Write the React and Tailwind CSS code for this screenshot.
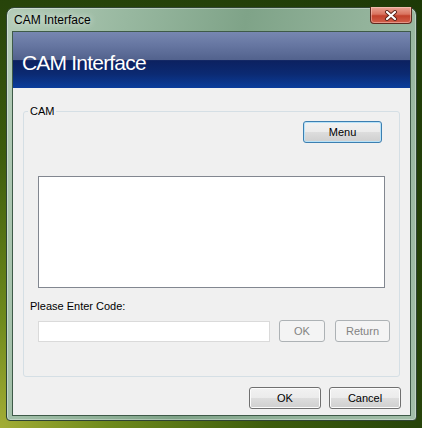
import React from "react";

const sans = { fontFamily: '"Liberation Sans", Arial, sans-serif' };

function Btn({ children, w, variant = "normal", className = "" }) {
  const base =
    "flex items-center justify-center h-[22px] rounded-[3px] text-[11px] leading-none border";
  const styles = {
    normal:
      "border-[#707070] text-black bg-[linear-gradient(to_bottom,#f2f2f2_0%,#ebebeb_50%,#dddddd_50%,#cfcfcf_100%)] shadow-[inset_0_0_0_1px_#fcfcfc]",
    focus:
      "border-[#3c7fb1] text-black bg-[linear-gradient(to_bottom,#f2f2f2_0%,#ebebeb_50%,#dddddd_50%,#cfcfcf_100%)] shadow-[inset_0_0_0_1px_#b8e2f8]",
    disabled: "border-[#adb2b5] text-[#838383] bg-[#f4f4f4]",
  };
  return (
    <div className={`${base} ${styles[variant]} ${w} ${className}`}>{children}</div>
  );
}

export default function App() {
  return (
    <div
      className="w-[422px] h-[428px] overflow-hidden pt-[7px] pl-[6px] bg-[radial-gradient(ellipse_at_0%_100%,#a3ad35_0%,#6f8a1c_18%,#3d5c0c_45%,#27440a_70%,#1d3907_100%)]"
      style={sans}
    >
      <div className="w-[411px] h-[414px] flex flex-col rounded-t-[8px] rounded-b-[4px] border border-[#2f4433] bg-[linear-gradient(100deg,#b4ccb8_0%,#98b8a0_25%,#7fa388_50%,#93b39b_75%,#a2bea8_100%)] shadow-[inset_0_0_0_1px_rgba(255,255,255,0.35)]">
        {/* title bar */}
        <div className="h-[23px] flex items-start">
          <div className="pl-[7px] pt-[5px] text-[12px] leading-[14px] text-black [text-shadow:0_0_6px_rgba(255,255,255,0.9)]">
            CAM Interface
          </div>
          <div className="ml-auto mr-[4px] -mt-[1px] w-[42px] h-[17px] rounded-b-[4px] border border-t-0 border-[#5e2a20] bg-[linear-gradient(to_bottom,#e9a595_0%,#d9735f_45%,#c2412b_55%,#d1614c_100%)] shadow-[inset_0_0_0_1px_rgba(255,220,210,0.45)] flex items-center justify-center">
            <svg width="14" height="11" viewBox="0 0 14 11">
              <path d="M3 2 L11 9 M11 2 L3 9" stroke="#5a2418" strokeWidth="4" strokeLinecap="round" />
              <path d="M3 2 L11 9 M11 2 L3 9" stroke="#ffffff" strokeWidth="2.2" strokeLinecap="round" />
            </svg>
          </div>
        </div>

        {/* client */}
        <div className="mx-[5px] h-[385px] border border-[#3e5a48] flex flex-col bg-[#f0f0f0]">
          {/* header banner */}
          <div className="h-[56px] flex items-center pl-[9px] pt-[5px] bg-[linear-gradient(to_bottom,#7787b1_0%,#6575a0_25%,#52628d_50%,#0c2160_51%,#0b2a72_75%,#0a3d9c_100%)]">
            <span className="text-[21px] tracking-[-0.8px] text-white leading-none">
              CAM Interface
            </span>
          </div>

          {/* body */}
          <div className="flex-1 flex flex-col">
            <div className="relative ml-[10px] mt-[23px] w-[377px] h-[266px] border border-[#d5dfe5] rounded-[3px] flex flex-col">
              <span className="absolute -top-[8px] left-[4px] px-[2px] bg-[#f0f0f0] text-[11px] leading-[14px] text-black">
                CAM
              </span>
              <Btn w="w-[79px]" variant="focus" className="ml-auto mr-[17px] mt-[9px]">
                Menu
              </Btn>
              <div className="ml-[14px] mt-[33px] w-[347px] h-[112px] border border-[#828790] bg-white" />
              <div className="ml-[6px] mt-[11px] text-[11px] leading-[14px] text-black">
                Please Enter Code:
              </div>
              <div className="flex items-center mt-[7px] ml-[14px]">
                <div className="w-[232px] h-[21px] border border-[#dadada] bg-white" />
                <Btn w="w-[46px]" variant="disabled" className="ml-[9px]">
                  OK
                </Btn>
                <Btn w="w-[55px]" variant="disabled" className="ml-[10px]">
                  Return
                </Btn>
              </div>
            </div>
            <div className="flex justify-end gap-[8px] pr-[9px] mt-[10px]">
              <Btn w="w-[72px]">OK</Btn>
              <Btn w="w-[72px]">Cancel</Btn>
            </div>
          </div>
        </div>
      </div>
    </div>
  );
}
